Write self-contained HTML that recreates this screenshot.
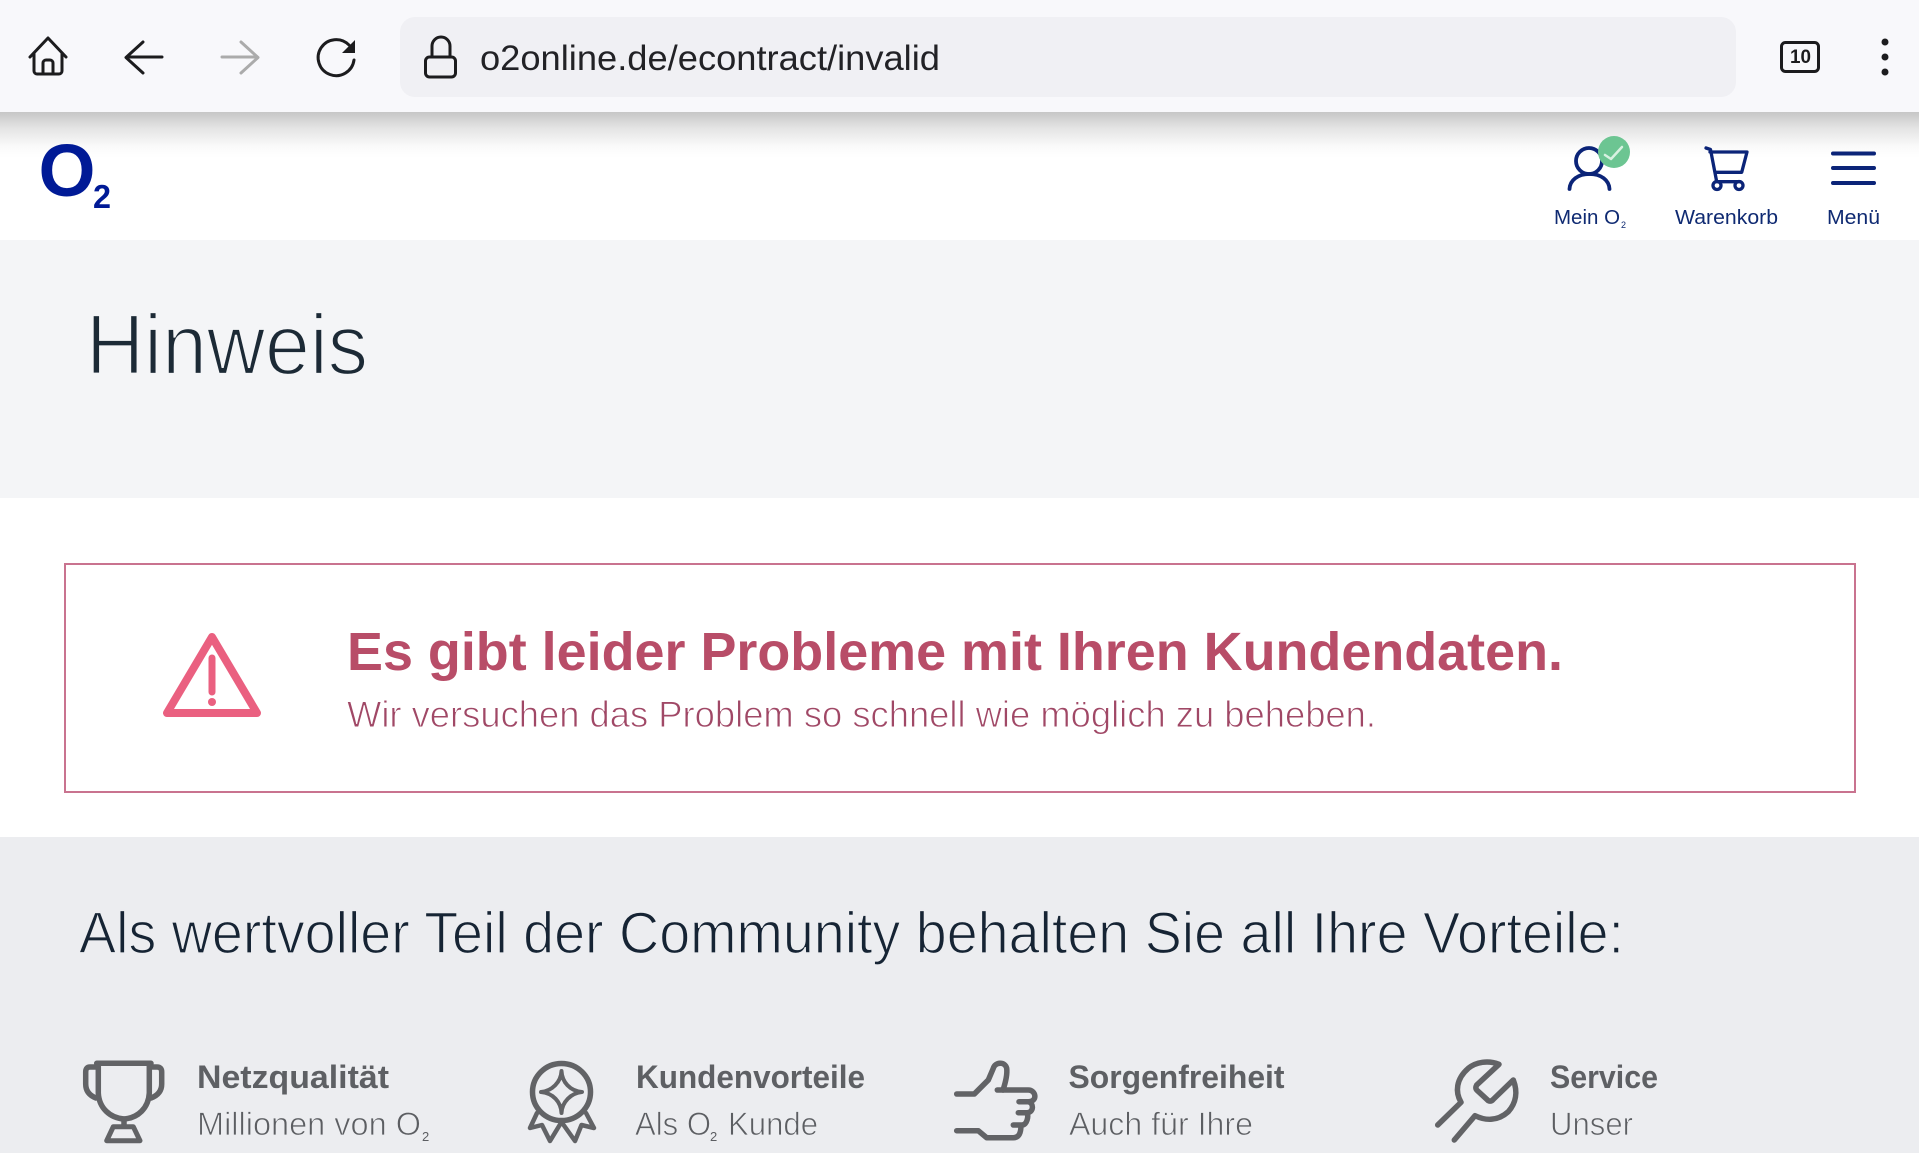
<!DOCTYPE html>
<html lang="de">
<head>
<meta charset="utf-8">
<title>o2online.de/econtract/invalid</title>
<style>
html,body{margin:0;padding:0;width:1919px;height:1153px;overflow:hidden;background:#fff}
svg{display:block;position:absolute;left:0;top:0}
text{font-family:"Liberation Sans",sans-serif}
.ic{fill:none;stroke-linecap:round;stroke-linejoin:round}
</style>
</head>
<body>
<svg width="1919" height="1153" viewBox="0 0 1919 1153" xmlns="http://www.w3.org/2000/svg">
<defs>
<linearGradient id="sh" x1="0" y1="0" x2="0" y2="1">
<stop offset="0" stop-color="#c6c6c6"/><stop offset=".35" stop-color="#e4e4e4"/><stop offset=".75" stop-color="#fafafa"/><stop offset="1" stop-color="#fff"/>
</linearGradient>
</defs>
<!-- backgrounds -->
<rect width="1919" height="1153" fill="#fff"/>
<rect y="112" width="1919" height="46" fill="url(#sh)"/>
<rect width="1919" height="112" fill="#f8f8fb"/>
<rect x="400" y="17" width="1336" height="80" rx="15" fill="#f0f0f4"/>
<rect y="240" width="1919" height="258" fill="#f4f5f7"/>
<rect y="837" width="1919" height="316" fill="#ecedf0"/>

<!-- toolbar icons -->
<g class="ic" stroke="#1c1c1e" stroke-width="3">
<path d="M30 57 L48 38 L66 57"/>
<path d="M34 53 V71 a3 3 0 0 0 3 3 H59 a3 3 0 0 0 3-3 V53"/>
<path d="M43 74 V63 a3 3 0 0 1 3-3 h4 a3 3 0 0 1 3 3 V74"/>
<path d="M162 57 H127 M143 42 L126 57.5 L143 73"/>
<path d="M349 45 A18 18 0 1 0 354 60"/>
<rect x="425.500" y="57" width="30" height="20" rx="4"/>
<path d="M432 57 V46 a9 9 0 0 1 18 0 V57"/>
</g>
<path d="M355 40 V53 H342 Z" fill="#1c1c1e"/>
<path class="ic" stroke="#ababab" stroke-width="3" d="M222 57 H257 M241 42 L258 57.500 L241 73"/>
<text x="480" y="70" font-size="35" fill="#222226" textLength="460" lengthAdjust="spacingAndGlyphs">o2online.de/econtract/invalid</text>
<rect x="1781.500" y="42.500" width="37" height="29" rx="4" fill="none" stroke="#1c1c1e" stroke-width="3"/>
<text x="1790" y="63" font-size="19" font-weight="700" fill="#1c1c1e" textLength="21" lengthAdjust="spacingAndGlyphs">10</text>
<circle cx="1885" cy="42" r="3.500" fill="#1c1c1e"/><circle cx="1885" cy="57" r="3.500" fill="#1c1c1e"/><circle cx="1885" cy="72" r="3.500" fill="#1c1c1e"/>

<!-- O2 logo -->
<text x="38.500" y="196" font-size="74" font-weight="700" fill="#001a96" textLength="57" lengthAdjust="spacingAndGlyphs">O</text>
<text x="93" y="208" font-size="33" font-weight="700" fill="#001a96" textLength="18" lengthAdjust="spacingAndGlyphs">2</text>

<!-- header icons -->
<g class="ic" stroke="#0b2478" stroke-width="3.800">
<circle cx="1589" cy="161" r="13"/>
<path d="M1569.500 189 C1570 180 1578 174 1589.500 174 C1601 174 1609 180 1609.500 189"/>
<path stroke-width="3.300" d="M1706 148 L1710.500 149.500 L1716.700 181.700 H1740 M1710 152 H1747 L1741.700 172.300 H1715"/>
<circle stroke-width="3.300" cx="1717" cy="185.500" r="4"/>
<circle stroke-width="3.300" cx="1739" cy="185.500" r="4"/>
<path stroke-width="4" d="M1833 153.500 H1874 M1833 168 H1874 M1833 183 H1874"/>
</g>
<circle cx="1614" cy="152" r="16" fill="#6cc592"/>
<path class="ic" stroke="#d8f1e1" stroke-width="2.500" d="M1605 155 L1611 159 L1622 147"/>
<g font-size="20" fill="#0f2a72">
<text x="1554" y="224" textLength="66" lengthAdjust="spacingAndGlyphs">Mein O</text>
<text x="1621" y="228" font-size="9">2</text>
<text x="1675" y="224" textLength="103" lengthAdjust="spacingAndGlyphs">Warenkorb</text>
<text x="1827" y="224" textLength="53" lengthAdjust="spacingAndGlyphs">Menü</text>
</g>

<!-- Hinweis -->
<text x="86" y="374" font-size="85" fill="#1c2a36" stroke="#f4f5f7" stroke-width="2.200" textLength="282" lengthAdjust="spacingAndGlyphs">Hinweis</text>

<!-- alert -->
<rect x="65" y="564" width="1790" height="228" fill="#fff" stroke="#c9738f" stroke-width="2"/>
<g class="ic" stroke="#ea6080">
<path stroke-width="8" d="M212 637 L167 713 H257 Z"/>
<path stroke-width="7" d="M212 658 V692"/>
</g>
<circle cx="212" cy="702" r="4" fill="#ea6080"/>
<text x="347" y="670" font-size="54" font-weight="700" fill="#b84d68" textLength="1216" lengthAdjust="spacingAndGlyphs">Es gibt leider Probleme mit Ihren Kundendaten.</text>
<text x="347" y="727" font-size="37" fill="#a04866" stroke="#fff" stroke-width=".9" textLength="1029" lengthAdjust="spacingAndGlyphs">Wir versuchen das Problem so schnell wie möglich zu beheben.</text>

<!-- community heading -->
<text x="79" y="953" font-size="58" fill="#162434" stroke="#ecedf0" stroke-width="1.300" textLength="1545" lengthAdjust="spacingAndGlyphs">Als wertvoller Teil der Community behalten Sie all Ihre Vorteile:</text>

<!-- feature icons -->
<g class="ic" stroke="#626366" stroke-width="5.500">
<path d="M96.700 1063.300 H151 M98.300 1063.300 V1093 C99 1108 110 1118 124 1119 C138 1118 148.500 1108 149.300 1093 V1063.300"/>
<path d="M97 1067 H90 Q85.700 1067 85.700 1072 V1084 Q85.700 1094 96 1098"/>
<path d="M151 1067 H157 Q161.700 1067 161.700 1072 V1084 Q161.700 1094 151 1098"/>
<path d="M124 1119 V1126"/>
<path stroke-width="5" d="M113.300 1126.700 H133.300 L140 1140.700 H106.700 Z"/>
<ellipse cx="561.500" cy="1092" rx="29" ry="28.500"/>
<path stroke-width="4" d="M561.500 1071 C562 1082 570 1091 582 1092 C571 1093 562 1102 561.500 1113 C561 1102 553 1093 541 1092 C552 1091 561 1082 561.500 1071 Z"/>
<path stroke-width="4.500" d="M537 1113 L530 1128 L542 1125 L550 1141 L561.500 1122 L575 1141 L581.500 1125 L594 1128 L586 1113"/>
<path d="M956.700 1094 H974.300 L988.300 1080 L993.300 1068.300 C995 1062 1005 1061 1006.700 1068.300 C1007.500 1075 1005 1084 1003 1090"/>
<path d="M997.300 1090 H1028.300 C1036 1090 1038 1101.700 1028.300 1101.700 H1019 M1028.300 1101.700 C1034 1103 1034 1112.700 1026.700 1112.700 H1018.300 M1026.700 1112.700 C1029 1116 1027 1125 1022 1125 H1013.300 M1021 1125 C1021 1131 1020 1137.700 1013.300 1137.700 H986.700 L978.300 1130.700 H956.700"/>
<path d="M1437.700 1125 L1461 1102.300 C1455 1092 1456 1079 1468.300 1068.300 C1476 1062 1488 1060 1499 1064.300 L1476.700 1085 Q1475 1088 1476.700 1090 L1488.300 1100.700 Q1491 1102 1493.300 1099.300 L1513.300 1080 C1518 1092 1516 1103 1508.300 1111.700 C1498 1121 1486 1121 1475 1115.700 L1454.300 1140"/>
</g>

<!-- feature text -->
<g fill="#5e6064" font-size="32">
<text x="197" y="1088" font-weight="700" textLength="192" lengthAdjust="spacingAndGlyphs">Netzqualität</text>
<text x="636" y="1088" font-weight="700" textLength="229" lengthAdjust="spacingAndGlyphs">Kundenvorteile</text>
<text x="1068.500" y="1088" font-weight="700" textLength="216" lengthAdjust="spacingAndGlyphs">Sorgenfreiheit</text>
<text x="1550" y="1088" font-weight="700" textLength="108" lengthAdjust="spacingAndGlyphs">Service</text>
</g>
<g fill="#5c5e62" font-size="32" stroke="#ecedf0" stroke-width=".8">
<text x="197" y="1135" textLength="224" lengthAdjust="spacingAndGlyphs">Millionen von O</text>
<text x="422" y="1141" font-size="13" stroke="none">2</text>
<text x="635" y="1135" textLength="76" lengthAdjust="spacingAndGlyphs">Als O</text>
<text x="710" y="1141" font-size="13" stroke="none">2</text>
<text x="728" y="1135" textLength="90" lengthAdjust="spacingAndGlyphs">Kunde</text>
<text x="1069" y="1135" textLength="184" lengthAdjust="spacingAndGlyphs">Auch für Ihre</text>
<text x="1550" y="1135" textLength="83" lengthAdjust="spacingAndGlyphs">Unser</text>
</g>
</svg>
</body>
</html>
